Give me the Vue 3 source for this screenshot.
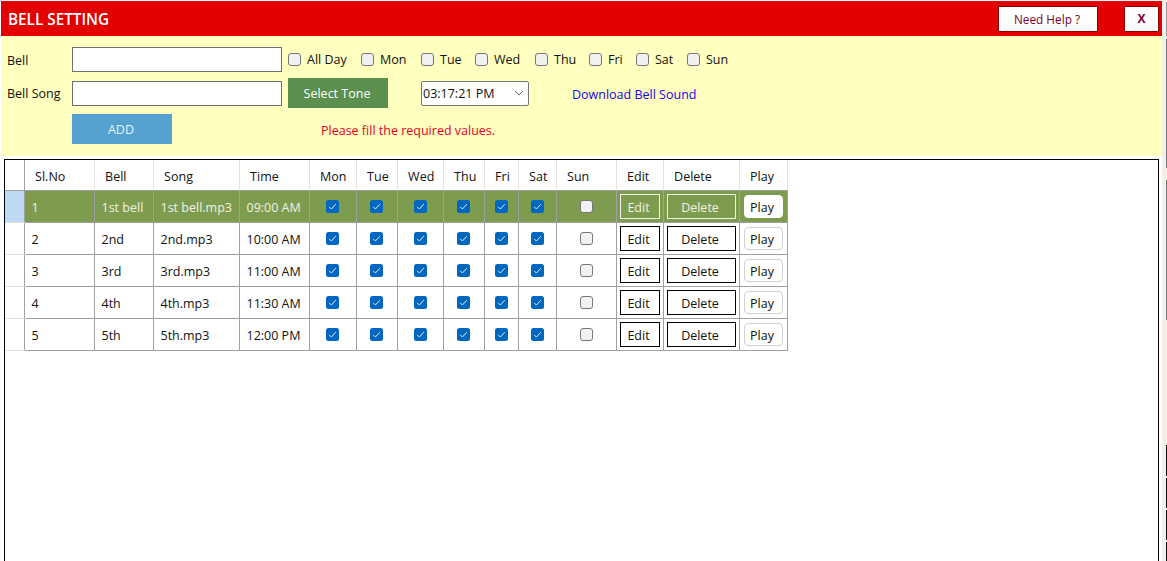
<template>
  <div class="page">
    <div class="window">
      <div class="title-bar">
        <span class="title">BELL SETTING</span>
        <button class="help-button">Need Help ?</button>
        <button class="close-button">X</button>
      </div>

      <div class="form-panel">
        <div class="form-row bell-row">
          <label class="field-label">Bell</label>
          <input class="text-input" type="text" />
          <div class="days">
            <label v-for="day in formDays" :key="day.name" class="day" :style="{ width: day.width + 'px' }">
              <input class="box" type="checkbox" />
              <span>{{ day.name }}</span>
            </label>
          </div>
        </div>
        <div class="form-row song-row">
          <label class="field-label">Bell Song</label>
          <input class="text-input" type="text" />
          <button class="tone-button">Select Tone</button>
          <div class="time-select">
            <span>03:17:21 PM</span>
            <svg width="10" height="6" viewBox="0 0 10 6">
              <path d="M1 1l4 4 4-4" fill="none" stroke="#666" stroke-width="1" />
            </svg>
          </div>
          <a class="download-link">Download Bell Sound</a>
        </div>
        <div class="form-row add-row">
          <button class="add-button">ADD</button>
          <span class="error-text">Please fill the required values.</span>
        </div>
      </div>

      <div class="grid-box">
        <table class="bell-table">
          <colgroup>
            <col class="c-head" />
            <col class="c-no" />
            <col class="c-bell" />
            <col class="c-song" />
            <col class="c-time" />
            <col class="c-mon" />
            <col class="c-tue" />
            <col class="c-wed" />
            <col class="c-thu" />
            <col class="c-fri" />
            <col class="c-sat" />
            <col class="c-sun" />
            <col class="c-edit" />
            <col class="c-delete" />
            <col class="c-play" />
          </colgroup>
          <thead>
            <tr>
              <th class="row-head"></th>
              <th v-for="col in columns" :key="col">{{ col }}</th>
            </tr>
          </thead>
          <tbody>
            <tr v-for="(row, i) in rows" :key="row.no" :class="{ selected: i === 0 }">
              <td class="row-head"></td>
              <td class="text-cell">{{ row.no }}</td>
              <td class="text-cell">{{ row.bell }}</td>
              <td class="text-cell">{{ row.song }}</td>
              <td class="text-cell">{{ row.time }}</td>
              <td v-for="n in 6" :key="n" class="check-cell">
                <svg class="checked" width="13" height="13" viewBox="0 0 13 13">
                  <rect width="13" height="13" rx="2.5" fill="#0067c0" />
                  <path d="M3.2 6.8l2.2 2.2 4.4-4.8" fill="none" stroke="#dfeaf5" stroke-width="1" />
                </svg>
              </td>
              <td class="check-cell"><span class="box-empty"></span></td>
              <td class="btn-cell"><button class="grid-button edit">Edit</button></td>
              <td class="btn-cell"><button class="grid-button delete">Delete</button></td>
              <td class="btn-cell"><button class="play-button">Play</button></td>
            </tr>
          </tbody>
        </table>
      </div>
    </div>

    <!-- bit of the window behind, showing down the right side -->
    <div class="gutter">
      <div class="strip">
        <span
          v-for="(seg, i) in stripSegments"
          :key="i"
          :style="{ height: seg.h + 'px', background: seg.color }"
        ></span>
      </div>
    </div>
  </div>
</template>

<script setup>
const formDays = [
  { name: 'All Day', width: 73 },
  { name: 'Mon', width: 60 },
  { name: 'Tue', width: 54 },
  { name: 'Wed', width: 60 },
  { name: 'Thu', width: 54 },
  { name: 'Fri', width: 47 },
  { name: 'Sat', width: 51 },
  { name: 'Sun', width: 50 },
];
const columns = ['Sl.No', 'Bell', 'Song', 'Time', 'Mon', 'Tue', 'Wed', 'Thu', 'Fri', 'Sat', 'Sun', 'Edit', 'Delete', 'Play'];
const rows = [
  { no: 1, bell: '1st bell', song: '1st bell.mp3', time: '09:00 AM' },
  { no: 2, bell: '2nd', song: '2nd.mp3', time: '10:00 AM' },
  { no: 3, bell: '3rd', song: '3rd.mp3', time: '11:00 AM' },
  { no: 4, bell: '4th', song: '4th.mp3', time: '11:30 AM' },
  { no: 5, bell: '5th', song: '5th.mp3', time: '12:00 PM' },
];
const stripSegments = [
  { h: 2, color: '#f3efeb' },
  { h: 34, color: '#9a9a9a' },
  { h: 3, color: '#f3efeb' },
  { h: 129, color: '#777' },
  { h: 12, color: '#fbf3ea' },
  { h: 140, color: '#777' },
  { h: 125, color: '#fbf3ea' },
  { h: 31, color: '#111' },
  { h: 2, color: '#fbf3ea' },
  { h: 30, color: '#111' },
  { h: 2, color: '#fbf3ea' },
  { h: 30, color: '#111' },
  { h: 2, color: '#fbf3ea' },
  { h: 19, color: '#111' },
];
</script>

<style>
html,
body {
  margin: 0;
  background: #fff;
  overflow: hidden;
}
</style>

<style scoped>
.page {
  width: 1167px;
  height: 561px;
  display: flex;
  font-family: "Open Sans", "Noto Sans", sans-serif;
  font-size: 12.5px;
  color: #111;
  overflow: hidden;
}

.window {
  width: 1161px;
  margin: 1px 0 0 1px;
}

.gutter {
  width: 5px;
  background: #f3efeb;
  display: flex;
  justify-content: flex-end;
}

.strip {
  width: 1px;
  display: flex;
  flex-direction: column;
}

.title-bar {
  height: 35px;
  background: #e30000;
  display: flex;
  align-items: center;
  padding: 0 3px 0 7px;
}

.title {
  flex: 1;
  color: #fff;
  font-size: 15.3px;
  font-weight: 600;
}

.help-button,
.close-button {
  height: 26px;
  background: #fff;
  border: 1px solid #8a0000;
  color: #7a0030;
  font-family: inherit;
  font-size: 11.8px;
  padding: 0;
}

.help-button {
  width: 100px;
  padding-right: 2px;
}

.close-button {
  width: 35px;
  margin-left: 26px;
  font-size: 12px;
  font-weight: 700;
}

.form-panel {
  height: 120px;
  box-sizing: border-box;
  background: #ffffc0;
  padding-top: 11px;
}

.form-row {
  display: flex;
  align-items: center;
  padding-left: 6px;
}

.bell-row {
  height: 25px;
}

.song-row {
  margin-top: 6px;
  height: 30px;
}

.add-row {
  margin-top: 6px;
  padding-left: 71px;
  height: 30px;
}

.field-label {
  width: 65px;
  padding-top: 1px;
}

.text-input {
  width: 210px;
  height: 25px;
  box-sizing: border-box;
  border: 1px solid #707070;
  background: #fff;
  margin: 0;
  padding: 0;
}

.days {
  display: flex;
  margin-left: 6px;
}

.day {
  display: flex;
  align-items: center;
  margin-top: -1px;
}

.day span {
  margin-left: 6px;
}

.box {
  appearance: none;
  width: 13px;
  height: 13px;
  box-sizing: border-box;
  margin: 0;
  border: 1px solid #767676;
  border-radius: 3px;
  background: #f1f1f1;
}

.tone-button {
  width: 100px;
  height: 30px;
  margin-left: 6px;
  border: none;
  background: #5b8f4d;
  color: #fff;
  font-family: inherit;
  font-size: 12.5px;
  font-weight: 500;
  padding: 0 2px 0 0;
}

.time-select {
  width: 108px;
  height: 25px;
  box-sizing: border-box;
  margin-left: 33px;
  border: 1px solid #767676;
  border-radius: 2px;
  background: #fff;
  display: flex;
  align-items: center;
  justify-content: space-between;
  padding: 0 4px 0 1px;
}

.download-link {
  margin-left: 43px;
  padding-top: 2px;
  color: #1a00f0;
}

.add-button {
  width: 100px;
  height: 30px;
  border: none;
  background: #55a2d0;
  color: #e6f1f8;
  font-family: inherit;
  font-size: 12.5px;
  padding: 0 2px 0 0;
}

.error-text {
  margin-left: 149px;
  padding-top: 2px;
  color: #e8002a;
}

.grid-box {
  height: 420px;
  box-sizing: border-box;
  margin: 3px 3px 0 3px;
  border: 1px solid #000;
}

.bell-table {
  table-layout: fixed;
  border-collapse: collapse;
  width: 782px;
}

.c-head { width: 19px; }
.c-no { width: 70px; }
.c-bell { width: 59px; }
.c-song { width: 86px; }
.c-time { width: 70px; }
.c-mon { width: 47px; }
.c-tue { width: 41px; }
.c-wed { width: 46px; }
.c-thu { width: 41px; }
.c-fri { width: 34px; }
.c-sat { width: 38px; }
.c-sun { width: 60px; }
.c-edit { width: 47px; }
.c-delete { width: 76px; }
.c-play { width: 48px; }

th {
  height: 30px;
  padding: 3px 0 0 10.6px;
  box-sizing: border-box;
  font-weight: 400;
  text-align: left;
  border-right: 1px solid #e2e2e2;
  border-bottom: 1px solid #a0a0a0;
  white-space: nowrap;
}

th.row-head {
  padding: 0;
  border-right: 1px solid #a0a0a0;
}

td {
  height: 32px;
  padding: 0;
  box-sizing: border-box;
  border-right: 1px solid #a0a0a0;
  border-bottom: 1px solid #a0a0a0;
  white-space: nowrap;
}

td.row-head {
  border-bottom-color: #e2e2e2;
}

.selected td {
  background: #7e9c50;
  color: #f2f2e2;
}

.selected td.row-head {
  background: #bddaf2;
}

.text-cell {
  padding: 2px 0 0 7px;
}

.check-cell {
  text-align: center;
}

.checked,
.box-empty {
  display: inline-block;
  vertical-align: middle;
  position: relative;
  top: -1px;
}

.box-empty {
  width: 13px;
  height: 13px;
  box-sizing: border-box;
  border: 1px solid #767676;
  border-radius: 3px;
  background: #f1f1f1;
}

.btn-cell {
  padding-left: 3px;
}

.grid-button {
  display: block;
  height: 25px;
  box-sizing: border-box;
  padding: 2px 2px 0 0;
  background: transparent;
  border: 1px solid #000;
  color: inherit;
  font-family: inherit;
  font-size: 12.5px;
}

.selected .grid-button {
  border-color: #f2f2e2;
}

.edit {
  width: 40px;
}

.delete {
  width: 69px;
}

.play-button {
  display: block;
  width: 39px;
  height: 23px;
  box-sizing: border-box;
  margin-left: 1px;
  padding: 2px 2px 0 0;
  background: #fff;
  border: 1px solid #d0d0d0;
  border-radius: 4px;
  color: #111;
  font-family: inherit;
  font-size: 12.5px;
}

.selected .play-button {
  border-color: #fff;
}
</style>
